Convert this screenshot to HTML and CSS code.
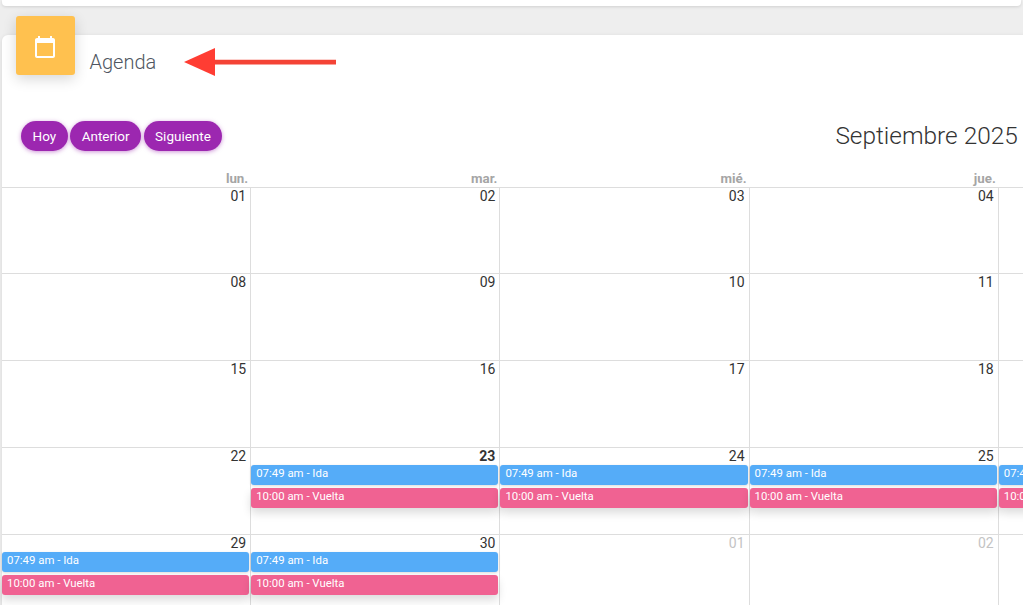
FILE: index.html
```html
<!DOCTYPE html>
<html lang="es">
<head>
<meta charset="utf-8">
<title>Agenda</title>
<link rel="stylesheet" href="styles.css">
</head>
<body>
<div class="topbar"></div>
<main class="card">
  <div class="card-icon">
    <svg width="24" height="24" viewBox="0 0 24 24" fill="#fff"><path d="M20 3h-1V1h-2v2H7V1H5v2H4c-1.1 0-2 .9-2 2v16c0 1.1.9 2 2 2h16c1.100 0 2-.9 2-2V5c0-1.100-.9-2-2-2zm0 18H4V8h16v13z"/></svg>
  </div>
  <svg class="arrow" width="160" height="32" viewBox="0 0 160 32"><path d="M30 13.800h123v4.700H30z" fill="#f44336"/><path d="M1 16 32 2v28z" fill="#ff3d33"/></svg>
  <h1 class="card-title">Agenda</h1>
  <div class="toolbar">
    <div class="buttons">
      <button class="btn">Hoy</button>
      <button class="btn">Anterior</button>
      <button class="btn">Siguiente</button>
    </div>
    <h2 class="month">Septiembre 2025</h2>
  </div>
  <div class="calendar">
    <div class="head">lun.</div><div class="head">mar.</div><div class="head">mié.</div><div class="head">jue.</div><div class="head">vie.</div>

    <div class="day"><span class="num">01</span></div><div class="day"><span class="num">02</span></div><div class="day"><span class="num">03</span></div><div class="day"><span class="num">04</span></div><div class="day"><span class="num">05</span></div>
    <div class="day"><span class="num">08</span></div><div class="day"><span class="num">09</span></div><div class="day"><span class="num">10</span></div><div class="day"><span class="num">11</span></div><div class="day"><span class="num">12</span></div>
    <div class="day"><span class="num">15</span></div><div class="day"><span class="num">16</span></div><div class="day"><span class="num">17</span></div><div class="day"><span class="num">18</span></div><div class="day"><span class="num">19</span></div>

    <div class="day"><span class="num">22</span></div>
    <div class="day"><span class="num today">23</span><div class="ev ida">07:49 am - Ida</div><div class="ev vuelta">10:00 am - Vuelta</div></div>
    <div class="day"><span class="num">24</span><div class="ev ida">07:49 am - Ida</div><div class="ev vuelta">10:00 am - Vuelta</div></div>
    <div class="day"><span class="num">25</span><div class="ev ida">07:49 am - Ida</div><div class="ev vuelta">10:00 am - Vuelta</div></div>
    <div class="day"><span class="num">26</span><div class="ev ida">07:49 am - Ida</div><div class="ev vuelta">10:00 am - Vuelta</div></div>

    <div class="day"><span class="num">29</span><div class="ev ida">07:49 am - Ida</div><div class="ev vuelta">10:00 am - Vuelta</div></div>
    <div class="day"><span class="num">30</span><div class="ev ida">07:49 am - Ida</div><div class="ev vuelta">10:00 am - Vuelta</div></div>
    <div class="day"><span class="num other">01</span></div>
    <div class="day"><span class="num other">02</span></div>
    <div class="day"><span class="num other">03</span></div>
  </div>
</main>
</body>
</html>
```
FILE: styles.css
```css
* { box-sizing: border-box; }
html, body { margin: 0; height: 605px; overflow: hidden; }
body { background: #eee; font-family: Roboto, "Liberation Sans", sans-serif; width: 1023px; }

.topbar {
  height: 6px;
  margin: 0 2px;
  background: #fff;
  border-radius: 0 0 4px 4px;
  box-shadow: 0 1px 3px rgba(0,0,0,.12);
}

.card {
  position: relative;
  width: 1800px;
  height: 700px;
  margin: 29px 0 0 2px;
  background: #fff;
  border-radius: 6px 0 0 0;
  box-shadow: 0 1px 4px rgba(0,0,0,.1);
}
.card-icon {
  position: absolute;
  left: 14px;
  top: -19px;
  width: 59px;
  height: 59px;
  display: flex;
  align-items: center;
  justify-content: center;
  padding: 2px 1px 0 0;
  background: #ffc14f;
  border-radius: 3px;
  box-shadow: 0 4px 14px rgba(0,0,0,.16);
}
.arrow { position: absolute; left: 181px; top: 11px; }

.card-title {
  margin: 0;
  padding: 14px 0 0 87.500px;
  height: 86px;
  font-size: 20px;
  line-height: 26px;
  font-weight: 300;
  color: #4f5661;
}

.toolbar { display: flex; align-items: center; height: 30px; padding-left: 19px; }
.buttons { display: flex; gap: 2.500px; }
.btn {
  height: 30px;
  padding: 0 11.500px;
  border: 0;
  border-radius: 15px;
  background: #9c27b0;
  color: #fff;
  font: 400 13.500px/30px Roboto, sans-serif;
  box-shadow: 0 1px 4px rgba(156,39,176,.5);
}
.month {
  margin: 0 0 0 613px;
  font-size: 24.400px;
  line-height: 30px;
  font-weight: 300;
  color: #333;
  white-space: nowrap;
}

.calendar {
  display: grid;
  grid-template-columns: repeat(5, 249.200px);
  grid-template-rows: 17.700px repeat(5, 86.750px);
  margin-top: 19px;
}
.head {
  padding-right: 3px;
  text-align: right;
  font-size: 13.300px;
  line-height: 18px;
  font-weight: 700;
  color: #a5a5a5;
  border-bottom: 1px solid #ddd;
}
.day {
  border-top: 1px solid #ddd;
  border-right: 1px solid #ddd;
  padding-top: 1px;
  margin-top: -1px;
  height: 87.750px;
}
.num {
  display: block;
  height: 16.500px;
  padding-right: 4px;
  text-align: right;
  font-size: 14px;
  line-height: 15px;
  color: #333;
}
.num.today { font-weight: 700; }
.num.other { color: #c4c4c4; }

.ev {
  height: 20px;
  margin: 0 1px 2.500px 0;
  padding-left: 5px;
  border-radius: 3px;
  color: #fff;
  font-size: 11.400px;
  line-height: 16px;
}
.ida { background: #55acf8; box-shadow: 0 1px 3px rgba(0,0,0,.14); }
.vuelta { background: #f06292; box-shadow: 0 5px 10px rgba(0,0,0,.14); }
```
